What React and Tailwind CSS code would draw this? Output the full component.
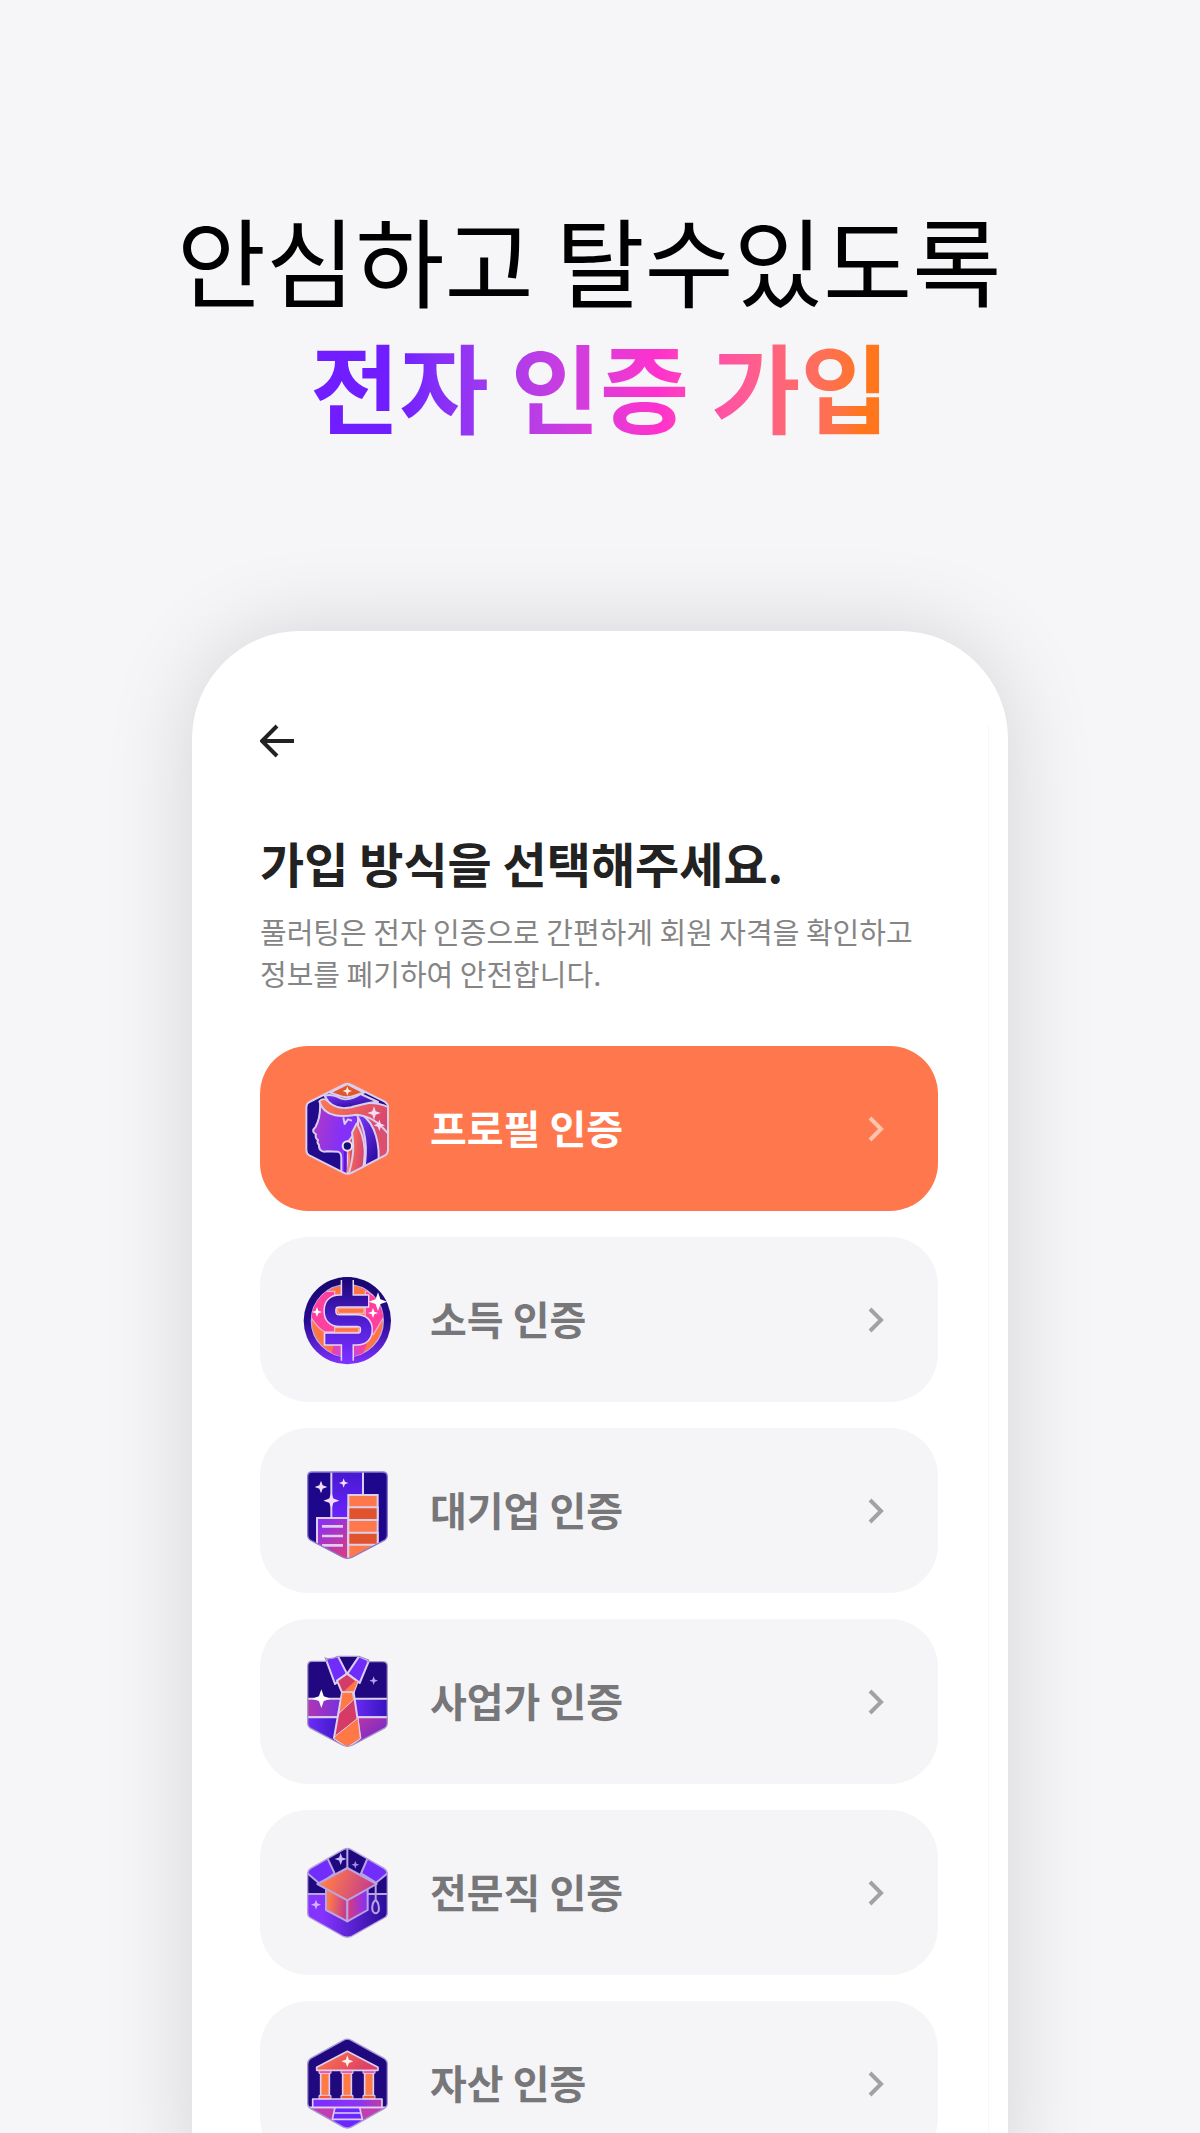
import { useState } from 'react';

const LINE = '#d9cdf0';

function Sparkle({ x, y, r, fill = '#f3dcf5' }) {
  const k = r * 0.26;
  return (
    <path
      fill={fill}
      stroke="none"
      d={`M${x} ${y - r}L${x + k} ${y - k}L${x + r} ${y}L${x + k} ${y + k}L${x} ${y + r}L${x - k} ${y + k}L${x - r} ${y}L${x - k} ${y - k}Z`}
    />
  );
}

function Badge({ top, children }) {
  return (
    <svg className="h-[96px] w-[90px] shrink-0" viewBox={`36 ${top} 270 288`} aria-hidden="true">
      {children}
    </svg>
  );
}

function ProfileIcon() {
  const hex = 'M160 43Q172 36 184 43L284 93Q294 99 294 110V238Q294 248 285 254L186 306Q173 313 160 306L58 254Q49 249 49 238V110Q49 99 58 94Z';
  return (
    <Badge top={31}>
      <defs>
        <clipPath id="profile-clip"><path d={hex} /></clipPath>
        <linearGradient id="profile-face" x1="0" y1="0" x2="1" y2="0.3">
          <stop offset="0" stopColor="#b23bc0" />
          <stop offset="0.7" stopColor="#8330f8" />
        </linearGradient>
        <linearGradient id="profile-hair" x1="0" y1="0" x2="1" y2="0.4">
          <stop offset="0" stopColor="#ff7a4c" />
          <stop offset="1" stopColor="#d8466f" />
        </linearGradient>
        <linearGradient id="profile-lock" x1="0" y1="0" x2="0.6" y2="1">
          <stop offset="0" stopColor="#8238ff" />
          <stop offset="1" stopColor="#2a0ca0" />
        </linearGradient>
      </defs>
      <g clipPath="url(#profile-clip)" stroke={LINE} strokeWidth="6" strokeLinejoin="round">
        <rect x="40" y="30" width="265" height="290" fill="#210b8c" stroke="none" />
        <path d="M186 120H300V320H170V200Z" fill="#dc4f6e" stroke="none" />
        <path d="M90 96C92 130 86 152 76 170Q62 182 78 191Q74 202 84 208Q80 216 87 223C86 240 98 246 112 242L144 243Q154 246 154 262V320H174V214L204 172V128Z" fill="url(#profile-face)" />
        <path d="M165 240V310" stroke="#5a18dc" strokeWidth="6" />
        <path d="M160 140L164 160L174 146L186 150" fill="none" />
        <path d="M186 186C196 240 184 280 176 310H214C230 262 228 204 200 158Z" fill="url(#profile-hair)" />
        <path d="M174 240Q182 262 172 304" fill="none" stroke="#f58a60" />
        <path d="M200 132C224 170 236 220 222 300L264 288C272 222 256 160 216 132Z" fill="url(#profile-lock)" />
        <path d="M88 92C98 82 104 84 112 90C140 118 180 110 216 99Q262 92 300 112V196C264 150 236 136 200 132C160 138 104 144 88 92Z" fill="url(#profile-hair)" />
        <path d="M104 76C118 70 138 76 152 83C172 90 194 82 212 70L264 94C236 94 206 104 184 110C146 118 118 104 104 76Z" fill="url(#profile-lock)" />
        <path d="M120 66L172 40L222 66C202 70 190 80 169 80C151 80 139 70 120 66Z" fill="#e4572c" />
      </g>
      <circle cx="172" cy="226" r="14" fill="#151078" stroke="#f4dfe8" strokeWidth="6" />
      <Sparkle x={172} y={61} r={14} fill="#fff0e8" />
      <Sparkle x={252} y={127} r={20} />
      <Sparkle x={268} y={164} r={17} />
      <path d={hex} fill="none" stroke={LINE} strokeWidth="6" />
    </Badge>
  );
}

function IncomeIcon() {
  return (
    <Badge top={34}>
      <defs>
        <linearGradient id="income-ring" x1="0" y1="0" x2="0" y2="1">
          <stop offset="0" stopColor="#16086c" />
          <stop offset="0.5" stopColor="#270a91" />
          <stop offset="1" stopColor="#8132ff" />
        </linearGradient>
        <linearGradient id="income-sign" gradientUnits="userSpaceOnUse" x1="0" y1="60" x2="0" y2="300">
          <stop offset="0" stopColor="#1e087a" />
          <stop offset="0.55" stopColor="#5420d8" />
          <stop offset="1" stopColor="#7a30ff" />
        </linearGradient>
        <clipPath id="income-clip"><circle cx="172" cy="180" r="108" /></clipPath>
      </defs>
      <circle cx="172" cy="180" r="131" fill="url(#income-ring)" />
      <circle cx="172" cy="180" r="108" fill="#ff7442" stroke="#c8a4e0" strokeWidth="4" />
      <g clipPath="url(#income-clip)">
        <path d="M106 92L64 130V172Q86 206 106 214H134V92Z" fill="#ff409f" stroke="#e8b0d4" strokeWidth="4" />
        <path d="M232 92L284 130V165L250 222L226 200V92Z" fill="#ff409f" stroke="#e8b0d4" strokeWidth="4" />
        <path d="M132 250L120 292H160V250ZM186 250V292H214L230 250Z" fill="#f040a8" />
        <path d="M136 256L150 288M206 256L194 288" stroke="#c04af0" strokeWidth="6" />
      </g>
      <g fill="none">
        <path d="M172 58V122M172 235V300M238 121H149Q120 121 120 150Q120 180 149 180H200Q229 180 229 207Q229 235 200 235H101" stroke="#e6d6f4" strokeWidth="40" />
        <path d="M172 50V122M172 235V306M234 121H149Q120 121 120 150Q120 180 149 180H200Q229 180 229 207Q229 235 200 235H106" stroke="url(#income-sign)" strokeWidth="31" />
      </g>
      <path d="M148 142H222V158H148Q138 150 148 142ZM134 201H202Q212 208 202 215H134Z" fill="#ff7442" stroke="#f1c5d0" strokeWidth="3" />
      <Sparkle x={264} y={123} r={28} fill="#ffffff" />
      <Sparkle x={249} y={157} r={15} fill="#ffffff" />
      <Sparkle x={81} y={154} r={15} fill="#ffffff" />
    </Badge>
  );
}

function CompanyIcon() {
  const shield = 'M66 64H278Q292 64 292 78V252Q292 264 281 270L188 319Q172 327 157 319L64 270Q53 264 53 252V78Q53 64 66 64Z';
  return (
    <Badge top={37}>
      <defs>
        <clipPath id="company-clip"><path d={shield} /></clipPath>
        <linearGradient id="company-sky" x1="0" y1="0" x2="0" y2="1">
          <stop offset="0" stopColor="#4318cc" />
          <stop offset="1" stopColor="#6c24ff" />
        </linearGradient>
        <linearGradient id="company-low" x1="0.2" y1="0" x2="0.7" y2="1">
          <stop offset="0" stopColor="#8930f4" />
          <stop offset="1" stopColor="#df3c7c" />
        </linearGradient>
      </defs>
      <g clipPath="url(#company-clip)" stroke="#dccfee" strokeWidth="6">
        <rect x="45" y="55" width="260" height="280" fill="#1e078a" stroke="none" />
        <rect x="124" y="50" width="95" height="160" fill="url(#company-sky)" />
        <rect x="81" y="202" width="94" height="140" fill="url(#company-low)" />
        <rect x="175" y="133" width="88" height="200" fill="#ff784c" />
        <path d="M175 170H263V208H175ZM175 246H263V282H175Z" fill="#e1532c" />
        <path d="M96 227H159M96 256H159M96 284H159" strokeWidth="8" />
      </g>
      <path d={shield} fill="none" stroke="#8d7bd0" strokeWidth="4" />
      <Sparkle x={93} y={109} r={19} />
      <Sparkle x={161} y={97} r={14} />
      <Sparkle x={124} y={150} r={24} />
    </Badge>
  );
}

function BusinessIcon() {
  const shield = 'M66 62H110L106 52Q122 58 144 47H207L236 58L232 63H278Q292 63 292 76V246Q292 258 281 264L188 313Q172 321 157 313L64 264Q53 258 53 246V76Q53 62 66 62Z';
  return (
    <Badge top={40}>
      <defs>
        <clipPath id="business-clip"><path d={shield} /></clipPath>
        <linearGradient id="business-left" x1="0" y1="0" x2="1" y2="0">
          <stop offset="0" stopColor="#b837ac" />
          <stop offset="1" stopColor="#6930e8" />
        </linearGradient>
        <linearGradient id="business-right" x1="0" y1="0" x2="1" y2="0">
          <stop offset="0" stopColor="#752fff" />
          <stop offset="1" stopColor="#3012b8" />
        </linearGradient>
        <linearGradient id="business-low" x1="0" y1="0" x2="1" y2="1">
          <stop offset="0" stopColor="#c53b9c" />
          <stop offset="1" stopColor="#5520e0" />
        </linearGradient>
      </defs>
      <g clipPath="url(#business-clip)" stroke="#dccfee" strokeWidth="6" strokeLinejoin="round">
        <rect x="45" y="40" width="260" height="290" fill="#210880" stroke="none" />
        <rect x="40" y="174" width="132" height="56" fill="url(#business-left)" />
        <rect x="172" y="174" width="132" height="56" fill="url(#business-right)" />
        <rect x="40" y="230" width="132" height="100" fill="url(#business-right)" />
        <rect x="172" y="230" width="132" height="100" fill="url(#business-low)" />
        <path d="M107 54L144 47L171 99L135 130Z" fill="#6f2cfa" />
        <path d="M207 47L237 60L209 127L172 99Z" fill="#6f2cfa" />
        <path d="M171 99L203 122L191 155H156L141 120Z" fill="#d63b68" />
        <path d="M196 120L160 153H191L203 122Z" fill="#ff7845" stroke="none" />
        <path d="M156 155H191L211 292L172 322L132 292Z" fill="#d63b68" />
        <path d="M156 155H187L191 177L147 218ZM204 232L211 294L172 320L132 294L136 286Z" fill="#ff7845" strokeWidth="3" />
      </g>
      <path d={shield} fill="none" stroke="#a798cc" strokeWidth="4" />
      <Sparkle x={94} y={174} r={28} fill="#ffffff" />
      <Sparkle x={251} y={120} r={13} fill="#b9a6f0" />
    </Badge>
  );
}

function LicenseIcon() {
  const hex = 'M160 57Q172 50 184 57L282 113Q292 119 292 130V246Q292 257 282 262L186 316Q172 323 158 316L62 262Q53 257 53 246V130Q53 119 62 113Z';
  return (
    <Badge top={43}>
      <defs>
        <clipPath id="license-clip"><path d={hex} /></clipPath>
        <linearGradient id="license-back" x1="0" y1="0" x2="1" y2="0">
          <stop offset="0.2" stopColor="#8534ff" />
          <stop offset="1" stopColor="#220a91" />
        </linearGradient>
        <linearGradient id="license-cap" x1="0" y1="0" x2="1" y2="0.2">
          <stop offset="0.2" stopColor="#ff7a4a" />
          <stop offset="1" stopColor="#c43e8c" />
        </linearGradient>
        <linearGradient id="license-side" x1="0" y1="0" x2="1" y2="0">
          <stop offset="0" stopColor="#d93c76" />
          <stop offset="1" stopColor="#8230ff" />
        </linearGradient>
      </defs>
      <g clipPath="url(#license-clip)" stroke="#b9a4e2" strokeWidth="6" strokeLinejoin="round">
        <rect x="45" y="45" width="260" height="145" fill="#20087f" />
        <rect x="45" y="190" width="260" height="140" fill="url(#license-back)" />
        <path d="M45 122L112 82L134 128L90 160ZM233 82L300 122L258 156L213 128Z" fill="#712dfa" />
        <path d="M172 45V120" />
        <path d="M108 165L172 205V272L108 238Z" fill="url(#license-cap)" />
        <path d="M172 205L233 165V238L172 272Z" fill="url(#license-side)" />
        <path d="M172 112L260 160L172 209L82 160Z" fill="url(#license-cap)" />
        <path d="M257 162V207M257 207Q243 220 248 241Q257 255 266 241Q269 220 257 207Z" fill="none" />
      </g>
      <path d={hex} fill="none" stroke="#b3a0dc" strokeWidth="4" />
      <Sparkle x={152} y={85} r={18} fill="#c9bcff" />
      <Sparkle x={196} y={102} r={12} fill="#a490ea" />
      <Sparkle x={78} y={222} r={15} fill="#d4b2ff" />
    </Badge>
  );
}

function AssetIcon() {
  const hex = 'M160 59Q172 52 184 59L282 113Q292 119 292 130V248Q292 259 282 264L186 318Q172 326 158 318L62 264Q53 259 53 248V130Q53 119 62 113Z';
  return (
    <Badge top={46}>
      <defs>
        <clipPath id="asset-clip"><path d={hex} /></clipPath>
        <linearGradient id="asset-roof" x1="0" y1="0" x2="1" y2="0.3">
          <stop offset="0" stopColor="#ff7a44" />
          <stop offset="1" stopColor="#dc3f69" />
        </linearGradient>
        <linearGradient id="asset-step" x1="0" y1="0" x2="1" y2="0">
          <stop offset="0" stopColor="#7b2cff" />
          <stop offset="0.7" stopColor="#8c35f2" />
          <stop offset="1" stopColor="#c23ba4" />
        </linearGradient>
      </defs>
      <g clipPath="url(#asset-clip)" stroke="#decff0" strokeWidth="5" strokeLinejoin="round">
        <rect x="45" y="45" width="260" height="290" fill="#20087f" stroke="none" />
        <path d="M45 260H300L172 340Z" fill="#c13eb0" />
        <path d="M135 260H209L217 296V340H127V296Z" fill="#6a27ff" />
        <path d="M133 277H212M127 296H217" />
        <rect x="68" y="235" width="208" height="25" fill="url(#asset-step)" />
        {[105, 171, 237].map((x) => (
          <g key={x}>
            <rect x={x - 13} y="156" width="26" height="72" fill="#ff7a45" />
            <rect x={x - 18} y="147" width="36" height="11" fill="#f73d97" strokeWidth="3" />
            <rect x={x - 18} y="224" width="36" height="10" fill="#f15d3c" strokeWidth="3" />
          </g>
        ))}
        <path d="M172 92L264 140V149H80V140Z" fill="url(#asset-roof)" />
      </g>
      <path d={hex} fill="none" stroke="#aa98d8" strokeWidth="4" />
      <Sparkle x={172} y={122} r={18} fill="#fff0ee" />
    </Badge>
  );
}

const methods = [
  { id: 'profile', label: '프로필 인증', Icon: ProfileIcon },
  { id: 'income', label: '소득 인증', Icon: IncomeIcon },
  { id: 'company', label: '대기업 인증', Icon: CompanyIcon },
  { id: 'business', label: '사업가 인증', Icon: BusinessIcon },
  { id: 'license', label: '전문직 인증', Icon: LicenseIcon },
  { id: 'asset', label: '자산 인증', Icon: AssetIcon },
];

function MethodButton({ label, Icon, active, onClick }) {
  return (
    <button
      type="button"
      aria-pressed={active}
      onClick={onClick}
      className={`flex h-[165px] w-full cursor-pointer items-center rounded-[48px] pl-[42px] pr-[52px] text-left ${
        active ? 'bg-[#ff784d] text-white' : 'bg-[#f5f5f8] text-[#77777a]'
      }`}
    >
      <Icon />
      <span className="ml-[38px] flex-1 pb-1 text-[40px] leading-[60px] font-bold">{label}</span>
      <svg
        className={`h-7 w-5 ${active ? 'text-[#ffc4ae]' : 'text-[#a2a2a4]'}`}
        viewBox="0 0 20 28"
        fill="none"
        stroke="currentColor"
        strokeWidth="4"
        aria-hidden="true"
      >
        <path d="M4 3L15 14L4 25" />
      </svg>
    </button>
  );
}

export default function App() {
  const [selected, setSelected] = useState('profile');

  return (
    <main className="h-screen overflow-hidden bg-[#f6f6f9] font-['Noto_Sans_CJK_KR',sans-serif]">
      <h1 className="pt-[195px] text-center text-[97px] leading-[126px] text-black">
        <span className="block whitespace-pre">안심하고 탈수있도록 </span>
        <span className="mx-auto block w-fit bg-linear-to-r from-[#701eff] from-15% via-[#ff30cd] via-60% to-[#ff761c] to-95% bg-clip-text font-bold text-transparent">
          전자 인증 가입
        </span>
      </h1>

      <section className="mx-auto mt-[184px] w-[68%] rounded-t-[108px] bg-white pt-[93px] shadow-[0_0_90px_rgba(0,0,0,0.14)]">
        <div className="mr-[19px] border-r border-[#f8f8f8] pr-[50px] pb-[26px] pl-[68px]">
          <button type="button" aria-label="뒤로" className="block cursor-pointer text-[#222222]">
            <svg className="h-9 w-9" viewBox="0 0 36 36" fill="none" stroke="currentColor" strokeWidth="4" aria-hidden="true">
              <path d="M17 2L2 17L17 32M2 17H34" />
            </svg>
          </button>

          <h2 className="mt-[66px] text-[48px] leading-[72px] font-bold text-[#222222]">
            가입 방식을 선택해주세요.
          </h2>
          <p className="mt-3 text-[29px] leading-[42px] text-[#858585]">
            풀러팅은 전자 인증으로 간편하게 회원 자격을 확인하고
            <br />
            정보를 폐기하여 안전합니다.
          </p>

          <div className="mt-[52px] flex flex-col gap-[26px]">
            {methods.map(({ id, label, Icon }) => (
              <MethodButton
                key={id}
                label={label}
                Icon={Icon}
                active={selected === id}
                onClick={() => setSelected(id)}
              />
            ))}
          </div>
        </div>
      </section>
    </main>
  );
}
